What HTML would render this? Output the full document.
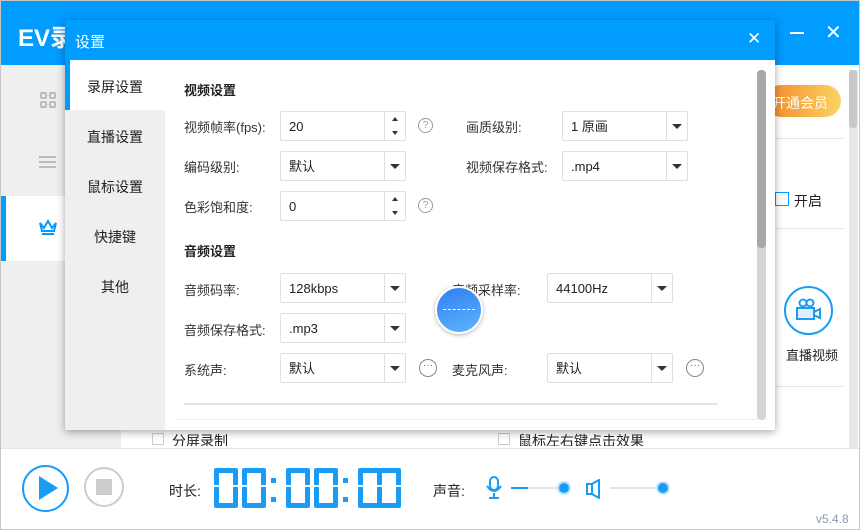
<!DOCTYPE html>
<html><head><meta charset="utf-8"><style>
*{margin:0;padding:0;box-sizing:border-box}
body{width:860px;height:530px;overflow:hidden;position:relative;background:#fff;font-family:"Liberation Sans","Noto Sans CJK SC",sans-serif;font-size:13px;color:#333}
.a{position:absolute}
.lbl{position:absolute;font-size:13px;color:#333}
.box{position:absolute;height:30px;border:1px solid #e0e0e0;border-radius:2px;background:#fff;font-size:13px;line-height:29px;padding-left:8px;color:#222}
.box .dd{position:absolute;right:0;top:0;width:21px;height:28px;border-left:1px solid #e0e0e0}
.box .dd:after{content:"";position:absolute;left:5px;top:12px;border-left:5px solid transparent;border-right:5px solid transparent;border-top:5px solid #333}
.box .sp{position:absolute;right:0;top:0;width:21px;height:28px;border-left:1px solid #e0e0e0}
.sp:before{content:"";position:absolute;left:7px;top:5px;border-left:3px solid transparent;border-right:3px solid transparent;border-bottom:4px solid #333}
.sp:after{content:"";position:absolute;left:7px;top:19px;border-left:3px solid transparent;border-right:3px solid transparent;border-top:4px solid #333}
.q{position:absolute;width:15px;height:15px;border:1px solid #999;border-radius:50%;font-size:10px;line-height:13px;text-align:center;color:#999}
.dots{position:absolute;width:18px;height:18px;border:1px solid #888;border-radius:50%;font-size:10px;line-height:11px;text-align:center;color:#666}
.nav{position:absolute;left:65px;width:100px;text-align:center;font-size:14px;color:#222}
.dg{position:absolute;top:468px;width:24px;height:40px;border:5px solid #1a9cf5;border-radius:2px}
.dg:after{content:"";position:absolute;left:-5px;right:-5px;top:12px;height:2px;background:#fff}
.col{position:absolute;width:5px;height:5px;background:#1a9cf5}
</style></head><body>
<div class="a" style="left:0;top:0;width:860px;height:530px;border:1px solid #c8c8c8"></div>
<div class="a" style="left:1px;top:1px;width:858px;height:64px;background:#009cff"></div>
<div class="a" style="left:18px;top:18px;color:#fff;font-size:24px;font-weight:bold">EV录</div>
<div class="a" style="left:790px;top:32px;width:14px;height:2px;background:#fff"></div>
<div class="a" style="left:825px;top:20px;color:#fff;font-size:20px">✕</div>
<div class="a" style="left:1px;top:65px;width:120px;height:383px;background:#efefef"></div>
<div class="a" style="left:1px;top:196px;width:64px;height:65px;background:#fff"></div>
<div class="a" style="left:1px;top:196px;width:5px;height:65px;background:#009cff"></div>
<div class="a" style="left:40px;top:92px;width:16px;height:16px;display:grid;grid-template-columns:7px 7px;gap:2px"><i style="border:2px solid #bbb;border-radius:2px"></i><i style="border:2px solid #bbb;border-radius:2px"></i><i style="border:2px solid #bbb;border-radius:2px"></i><i style="border:2px solid #bbb;border-radius:2px"></i></div>
<div class="a" style="left:39px;top:156px;width:17px;height:12px;border-top:2px solid #bbb;border-bottom:2px solid #bbb"><i class="a" style="left:0;top:3px;width:17px;height:2px;background:#bbb"></i></div>
<svg class="a" style="left:38px;top:219px" width="20" height="17"><path d="M2 4 L6 9 L10 2 L14 9 L18 4 L16 12 L4 12 Z" fill="none" stroke="#009cff" stroke-width="2"/><path d="M4 15 H16" stroke="#009cff" stroke-width="2"/></svg>
<div class="a" style="left:765px;top:85px;width:76px;height:32px;border-radius:16px;background:linear-gradient(90deg,#f5882a,#f9d463)"></div>
<div class="a" style="left:772px;top:93px;color:#fff;font-size:14px">开通会员</div>
<div class="a" style="left:776px;top:138px;width:68px;height:1px;background:#e5e5e5"></div>
<div class="a" style="left:775px;top:192px;width:14px;height:14px;border:1px solid #009cff"></div>
<div class="a" style="left:794px;top:191px;font-size:14px;color:#222">开启</div>
<div class="a" style="left:776px;top:228px;width:68px;height:1px;background:#e5e5e5"></div>
<div class="a" style="left:784px;top:286px;width:49px;height:49px;border:2px solid #1a9cf5;border-radius:50%"></div>
<svg class="a" style="left:795px;top:297px" width="28" height="26"><circle cx="8" cy="6" r="3.5" fill="none" stroke="#1a9cf5" stroke-width="2"/><circle cx="15" cy="6" r="3.5" fill="none" stroke="#1a9cf5" stroke-width="2"/><rect x="2" y="11" width="17" height="11" fill="#dff0fd" stroke="#1a9cf5" stroke-width="2"/><path d="M19 15 L25 12 V21 L19 18" fill="none" stroke="#1a9cf5" stroke-width="2"/></svg>
<div class="a" style="left:786px;top:345px;font-size:13px;color:#222">直播视频</div>
<div class="a" style="left:776px;top:386px;width:68px;height:1px;background:#e5e5e5"></div>
<div class="a" style="left:849px;top:70px;width:9px;height:378px;background:#e8e8e8"></div>
<div class="a" style="left:849px;top:70px;width:8px;height:58px;background:#c8c8c8;border-radius:3px"></div>
<div class="a" style="left:152px;top:433px;width:12px;height:12px;border:1px solid #ccc"></div>
<div class="a" style="left:172px;top:431px;font-size:14px;color:#222;height:15px;overflow:hidden;line-height:20px">分屏录制</div>
<div class="a" style="left:498px;top:433px;width:12px;height:12px;border:1px solid #ccc"></div>
<div class="a" style="left:518px;top:431px;font-size:14px;color:#222;height:15px;overflow:hidden;line-height:20px">鼠标左右键点击效果</div>
<div class="a" style="left:1px;top:448px;width:858px;height:1px;background:#e5e5e5"></div>
<div class="a" style="left:22px;top:465px;width:47px;height:47px;border:2px solid #1a9cf5;border-radius:50%"></div>
<div class="a" style="left:39px;top:476px;border-top:12px solid transparent;border-bottom:12px solid transparent;border-left:19px solid #1a9cf5"></div>
<div class="a" style="left:84px;top:467px;width:40px;height:40px;border:2px solid #ccc;border-radius:50%"></div>
<div class="a" style="left:96px;top:479px;width:16px;height:16px;background:#ccc"></div>
<div class="a" style="left:169px;top:481px;font-size:14px;color:#222">时长:</div>
<div class="dg" style="left:214px"></div><div class="dg" style="left:242px"></div>
<div class="col" style="left:271px;top:478px"></div><div class="col" style="left:271px;top:497px"></div>
<div class="dg" style="left:286px"></div><div class="dg" style="left:314px"></div>
<div class="col" style="left:343px;top:478px"></div><div class="col" style="left:343px;top:497px"></div>
<div class="dg" style="left:358px"></div><div class="dg" style="left:377px"></div>
<div class="a" style="left:433px;top:481px;font-size:14px;color:#222">声音:</div>
<svg class="a" style="left:485px;top:476px" width="18" height="24"><rect x="5" y="1" width="8" height="13" rx="4" fill="none" stroke="#1a9cf5" stroke-width="2"/><path d="M2 10 Q9 20 16 10 M9 17 V22 M4 22 H14" fill="none" stroke="#1a9cf5" stroke-width="2"/></svg>
<div class="a" style="left:511px;top:487px;width:56px;height:2px;background:#e5e5e5"></div>
<div class="a" style="left:511px;top:487px;width:17px;height:2px;background:#1a9cf5"></div>
<div class="a" style="left:559px;top:483px;width:10px;height:10px;border-radius:50%;background:#1a9cf5;box-shadow:0 0 0 2px #bfe3fc"></div>
<svg class="a" style="left:585px;top:479px" width="16" height="20"><path d="M2 5 H7 L14 1 V19 L7 15 H2 Z M7 5 V15" fill="none" stroke="#1a9cf5" stroke-width="2"/></svg>
<div class="a" style="left:610px;top:487px;width:56px;height:2px;background:#e5e5e5"></div>
<div class="a" style="left:658px;top:483px;width:10px;height:10px;border-radius:50%;background:#1a9cf5;box-shadow:0 0 0 2px #bfe3fc"></div>
<div class="a" style="left:816px;top:512px;font-size:12px;color:#8a9ab0">v5.4.8</div>

<div class="a" style="left:65px;top:20px;width:710px;height:410px;background:#fff;box-shadow:0 2px 8px rgba(0,0,0,.35)"></div>
<div class="a" style="left:65px;top:20px;width:710px;height:40px;background:#009cff"></div>
<div class="a" style="left:75px;top:31px;color:#fff;font-size:15px">设置</div>
<div class="a" style="left:747px;top:29px;color:#fff;font-size:17px">✕</div>
<div class="a" style="left:65px;top:60px;width:5px;height:50px;background:#009cff"></div>
<div class="a" style="left:65px;top:110px;width:100px;height:320px;background:#efefef"></div>
<div class="nav" style="top:77px">录屏设置</div>
<div class="nav" style="top:127px">直播设置</div>
<div class="nav" style="top:177px">鼠标设置</div>
<div class="nav" style="top:227px">快捷键</div>
<div class="nav" style="top:277px">其他</div>
<div class="a" style="left:757px;top:70px;width:9px;height:350px;background:#d4d4d4;border-radius:4px"></div>
<div class="a" style="left:757px;top:70px;width:9px;height:178px;background:#a8a8a8;border-radius:4px"></div>

<div class="lbl" style="left:184px;top:80px;font-weight:bold;color:#222">视频设置</div>
<div class="lbl" style="left:184px;top:117px">视频帧率(fps):</div>
<div class="box" style="left:280px;top:111px;width:126px">20<div class="sp"></div></div>
<div class="q" style="left:418px;top:118px">?</div>
<div class="lbl" style="left:466px;top:117px">画质级别:</div>
<div class="box" style="left:562px;top:111px;width:126px">1 原画<div class="dd"></div></div>
<div class="lbl" style="left:184px;top:157px">编码级别:</div>
<div class="box" style="left:280px;top:151px;width:126px">默认<div class="dd"></div></div>
<div class="lbl" style="left:466px;top:157px">视频保存格式:</div>
<div class="box" style="left:562px;top:151px;width:126px">.mp4<div class="dd"></div></div>
<div class="lbl" style="left:184px;top:197px">色彩饱和度:</div>
<div class="box" style="left:280px;top:191px;width:126px">0<div class="sp"></div></div>
<div class="q" style="left:418px;top:198px">?</div>

<div class="lbl" style="left:184px;top:241px;font-weight:bold;color:#222">音频设置</div>
<div class="lbl" style="left:184px;top:280px">音频码率:</div>
<div class="box" style="left:280px;top:273px;width:126px">128kbps<div class="dd"></div></div>
<div class="lbl" style="left:452px;top:280px">音频采样率:</div>
<div class="box" style="left:547px;top:273px;width:126px">44100Hz<div class="dd"></div></div>
<div class="lbl" style="left:184px;top:320px">音频保存格式:</div>
<div class="box" style="left:280px;top:313px;width:126px">.mp3<div class="dd"></div></div>
<div class="lbl" style="left:184px;top:360px">系统声:</div>
<div class="box" style="left:280px;top:353px;width:126px">默认<div class="dd"></div></div>
<div class="dots" style="left:419px;top:359px">···</div>
<div class="lbl" style="left:452px;top:360px">麦克风声:</div>
<div class="box" style="left:547px;top:353px;width:126px">默认<div class="dd"></div></div>
<div class="dots" style="left:686px;top:359px">···</div>
<div class="a" style="left:184px;top:403px;width:534px;height:2px;background:#e5e5e5"></div>
<div class="a" style="left:175px;top:419px;width:582px;height:1px;background:#eee"></div>

<div class="a" style="left:435px;top:286px;width:48px;height:48px;border-radius:50%;background:linear-gradient(160deg,#2f7fee,#5fb4ff);border:2px solid #fff;box-shadow:0 1px 4px rgba(0,0,0,.3)"></div>
<div class="a" style="left:443px;top:309px;width:32px;border-top:1px dashed #fff"></div>
</body></html>
